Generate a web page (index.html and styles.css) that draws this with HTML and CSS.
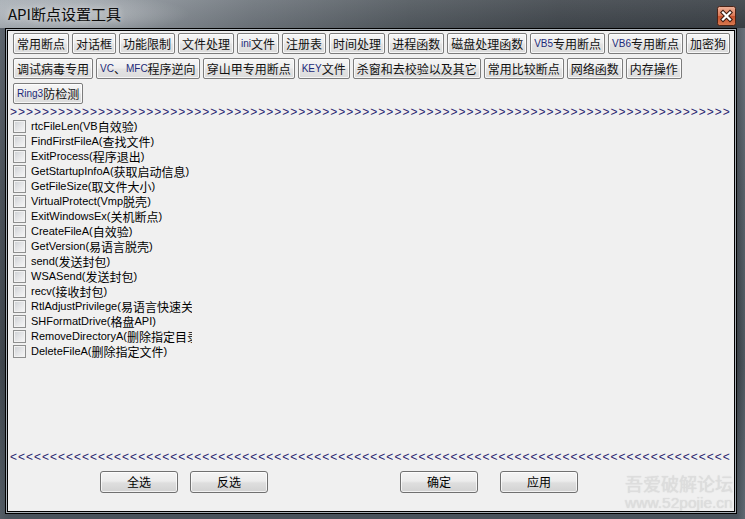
FILE: index.html
```html
<!DOCTYPE html>
<html lang="zh-CN">
<head>
<meta charset="utf-8">
<title>API断点设置工具</title>
<link rel="stylesheet" href="styles.css">
</head>
<body>
<div class="window">
  <div class="titlebar">
    <span class="title">API断点设置工具</span>
    <span class="close" aria-label="关闭">
      <svg width="19" height="20" viewBox="0 0 19 20">
        <defs>
          <linearGradient id="cg" x1="0" y1="0" x2="0" y2="1">
            <stop offset="0" stop-color="#eeb29a"/>
            <stop offset="0.48" stop-color="#dd7a58"/>
            <stop offset="0.52" stop-color="#c9522e"/>
            <stop offset="1" stop-color="#d87a50"/>
          </linearGradient>
        </defs>
        <rect x="0.5" y="0.5" width="18" height="19" rx="2" fill="url(#cg)" stroke="#4a2418"/>
        <path d="M6 6.5 L13 13.5 M13 6.5 L6 13.5" stroke="#3a1a10" stroke-width="4.2" stroke-linecap="square"/>
        <path d="M6 6.5 L13 13.5 M13 6.5 L6 13.5" stroke="#ffffff" stroke-width="2.2" stroke-linecap="square"/>
      </svg>
    </span>
  </div>

  <div class="client">
    <div class="toolbar">
      <div class="tb-row">
        <button class="tb">常用断点</button>
        <button class="tb">对话框</button>
        <button class="tb">功能限制</button>
        <button class="tb">文件处理</button>
        <button class="tb"><span class="lat">ini</span>文件</button>
        <button class="tb">注册表</button>
        <button class="tb">时间处理</button>
        <button class="tb">进程函数</button>
        <button class="tb">磁盘处理函数</button>
        <button class="tb"><span class="lat">VB5</span>专用断点</button>
        <button class="tb"><span class="lat">VB6</span>专用断点</button>
        <button class="tb">加密狗</button>
      </div>
      <div class="tb-row">
        <button class="tb">调试病毒专用</button>
        <button class="tb"><span class="lat">VC</span>、<span class="lat">MFC</span>程序逆向</button>
        <button class="tb">穿山甲专用断点</button>
        <button class="tb"><span class="lat">KEY</span>文件</button>
        <button class="tb">杀窗和去校验以及其它</button>
        <button class="tb">常用比较断点</button>
        <button class="tb">网络函数</button>
        <button class="tb">内存操作</button>
      </div>
      <div class="tb-row">
        <button class="tb"><span class="lat">Ring3</span>防检测</button>
      </div>
    </div>

    <div class="sep sep-top">&gt;&gt;&gt;&gt;&gt;&gt;&gt;&gt;&gt;&gt;&gt;&gt;&gt;&gt;&gt;&gt;&gt;&gt;&gt;&gt;&gt;&gt;&gt;&gt;&gt;&gt;&gt;&gt;&gt;&gt;&gt;&gt;&gt;&gt;&gt;&gt;&gt;&gt;&gt;&gt;&gt;&gt;&gt;&gt;&gt;&gt;&gt;&gt;&gt;&gt;&gt;&gt;&gt;&gt;&gt;&gt;&gt;&gt;&gt;&gt;&gt;&gt;&gt;&gt;&gt;&gt;&gt;&gt;&gt;&gt;&gt;&gt;&gt;&gt;&gt;&gt;&gt;&gt;&gt;&gt;&gt;&gt;&gt;&gt;&gt;&gt;&gt;&gt;&gt;&gt;&gt;&gt;&gt;&gt;</div>

    <ul class="list">
      <li class="item"><span class="cb"></span>rtcFileLen(VB<span class="zh">自效验</span>)</li>
      <li class="item"><span class="cb"></span>FindFirstFileA(<span class="zh">查找文件</span>)</li>
      <li class="item"><span class="cb"></span>ExitProcess(<span class="zh">程序退出</span>)</li>
      <li class="item"><span class="cb"></span>GetStartupInfoA(<span class="zh">获取启动信息</span>)</li>
      <li class="item"><span class="cb"></span>GetFileSize(<span class="zh">取文件大小</span>)</li>
      <li class="item"><span class="cb"></span>VirtualProtect(Vmp<span class="zh">脱壳</span>)</li>
      <li class="item"><span class="cb"></span>ExitWindowsEx(<span class="zh">关机断点</span>)</li>
      <li class="item"><span class="cb"></span>CreateFileA(<span class="zh">自效验</span>)</li>
      <li class="item"><span class="cb"></span>GetVersion(<span class="zh">易语言脱壳</span>)</li>
      <li class="item"><span class="cb"></span>send(<span class="zh">发送封包</span>)</li>
      <li class="item"><span class="cb"></span>WSASend(<span class="zh">发送封包</span>)</li>
      <li class="item"><span class="cb"></span>recv(<span class="zh">接收封包</span>)</li>
      <li class="item"><span class="cb"></span>RtlAdjustPrivilege(<span class="zh">易语言快速关机</span>)</li>
      <li class="item"><span class="cb"></span>SHFormatDrive(<span class="zh">格盘</span>API)</li>
      <li class="item"><span class="cb"></span>RemoveDirectoryA(<span class="zh">删除指定目录</span>)</li>
      <li class="item"><span class="cb"></span>DeleteFileA(<span class="zh">删除指定文件</span>)</li>
    </ul>

    <div class="sep sep-bottom">&lt;&lt;&lt;&lt;&lt;&lt;&lt;&lt;&lt;&lt;&lt;&lt;&lt;&lt;&lt;&lt;&lt;&lt;&lt;&lt;&lt;&lt;&lt;&lt;&lt;&lt;&lt;&lt;&lt;&lt;&lt;&lt;&lt;&lt;&lt;&lt;&lt;&lt;&lt;&lt;&lt;&lt;&lt;&lt;&lt;&lt;&lt;&lt;&lt;&lt;&lt;&lt;&lt;&lt;&lt;&lt;&lt;&lt;&lt;&lt;&lt;&lt;&lt;&lt;&lt;&lt;&lt;&lt;&lt;&lt;&lt;&lt;&lt;&lt;&lt;&lt;&lt;&lt;&lt;&lt;&lt;&lt;&lt;&lt;&lt;&lt;&lt;&lt;&lt;&lt;</div>

    <div class="actions">
      <div class="group">
        <button class="act">全选</button>
        <button class="act">反选</button>
      </div>
      <div class="group group-right">
        <button class="act">确定</button>
        <button class="act">应用</button>
      </div>
    </div>
  </div>

  <div class="watermark">
    <div class="wm-cn">吾爱破解论坛</div>
    <div class="wm-url">www.52pojie.cn</div>
  </div>
</div>
</body>
</html>
```

FILE: styles.css
```css
* { box-sizing: border-box; }

html, body {
  margin: 0;
  padding: 0;
  width: 745px;
  height: 519px;
  overflow: hidden;
  background: #2e343a;
}

.window {
  position: relative;
  width: 745px;
  height: 519px;
  display: flex;
  flex-direction: column;
  background:
    linear-gradient(to right, rgba(255,255,255,0.06), rgba(0,0,0,0) 8px, rgba(0,0,0,0) 737px, rgba(160,170,180,0.25)),
    linear-gradient(to bottom, #59616a 0%, #434a52 35%, #363d44 70%, #4a535c 100%);
  font-family: "Noto Sans CJK SC", "Liberation Sans", sans-serif;
}

.titlebar {
  height: 28px;
  flex: none;
  display: flex;
  align-items: center;
  padding: 0 9px 0 8px;
  background:
    radial-gradient(ellipse 120px 20px at 70px 14px, rgba(255,255,255,0.35), rgba(255,255,255,0) 100%),
    linear-gradient(to bottom, rgba(255,255,255,0.08), rgba(0,0,0,0.05)),
    linear-gradient(to right, #a4abb2 0%, #939aa1 14%, #6e757c 34%, #52595f 55%, #42484e 75%, #3b4147 100%);
}

.title {
  font-size: 15px;
  line-height: 20px;
  color: #0c0c0c;
  text-shadow: 0 0 6px rgba(255,255,255,0.6);
}

.close {
  margin-left: auto;
  margin-top: 3px;
  width: 19px;
  height: 20px;
  display: block;
}
.close svg { display: block; }

.client {
  flex: 1;
  margin: 0 8px 5px 5px;
  background: #f0f0f0;
  border: 1px solid #000;
  box-shadow: inset 0 0 0 1px #aab1b8, inset 0 0 0 2px #000;
  padding-top: 4px;
  display: flex;
  flex-direction: column;
}

.toolbar {
  padding-left: 7px;
  display: flex;
  flex-direction: column;
  gap: 4px;
}

.tb-row {
  display: flex;
  gap: 3px;
}

.tb {
  height: 21px;
  margin: 0;
  padding: 0 3px;
  border: 1px solid #7c7c7c;
  border-radius: 2px;
  background: linear-gradient(to bottom, #f6f6f6 0%, #eeeeee 45%, #e3e3e3 55%, #dcdcdc 100%);
  box-shadow: inset 0 0 0 1px rgba(255,255,255,0.75);
  font-family: "Noto Sans CJK SC", "Liberation Sans", sans-serif;
  font-size: 12px;
  line-height: 19px;
  color: #111;
  white-space: nowrap;
  display: flex;
  align-items: center;
}

.lat {
  font-family: "Liberation Sans", sans-serif;
  font-size: 10px;
  color: #1c2a78;
}

.sep {
  height: 10px;
  line-height: 10px;
  width: 720px;
  margin-left: 4px;
  overflow: hidden;
  white-space: nowrap;
  font-family: "Liberation Sans", sans-serif;
  font-size: 12px;
  letter-spacing: 1px;
  color: #2a2670;
}

.sep-top { margin-top: 3px; }
.sep-bottom { margin-top: auto; }

.list {
  list-style: none;
  margin: 2px 0 0 7px;
  padding: 0;
  width: 179px;
  overflow: hidden;
}

.item {
  height: 15px;
  line-height: 15px;
  display: flex;
  align-items: center;
  white-space: nowrap;
  font-family: "Liberation Sans", "Noto Sans CJK SC", sans-serif;
  font-size: 11px;
  color: #000;
}

.zh {
  font-family: "Noto Sans CJK SC", sans-serif;
  font-size: 12px;
  line-height: 15px;
}

.cb {
  flex: none;
  width: 13px;
  height: 13px;
  margin-right: 5px;
  border: 1px solid #8e8f8f;
  background: linear-gradient(135deg, #cdd0d4 0%, #e4e5e7 50%, #f7f7f7 100%);
  box-shadow: inset 0 0 0 1px #f2f2f2;
}

.actions {
  margin: 9px 0 20px 94px;
  display: flex;
}

.group {
  display: flex;
  gap: 12px;
}

.group-right {
  margin-left: 132px;
  gap: 22px;
}

.act {
  width: 78px;
  height: 22px;
  margin: 0;
  padding: 0;
  border: 1px solid #707070;
  border-radius: 3px;
  background: linear-gradient(to bottom, #f4f4f4 0%, #ececec 45%, #dedede 55%, #d2d2d2 100%);
  box-shadow: inset 0 0 0 1px rgba(255,255,255,0.7);
  font-family: "Noto Sans CJK SC", sans-serif;
  font-size: 12px;
  line-height: 20px;
  color: #000;
}

.watermark {
  position: absolute;
  left: 625px;
  top: 471px;
  width: 112px;
  color: rgba(222, 222, 222, 0.92);
  text-shadow: 0 0 1px rgba(120,120,120,0.25);
}

.wm-cn {
  font-family: "Noto Sans CJK SC", sans-serif;
  font-size: 18px;
  line-height: 24px;
}

.wm-url {
  font-family: "Liberation Sans", sans-serif;
  font-size: 15.5px;
  line-height: 16px;
}
```
